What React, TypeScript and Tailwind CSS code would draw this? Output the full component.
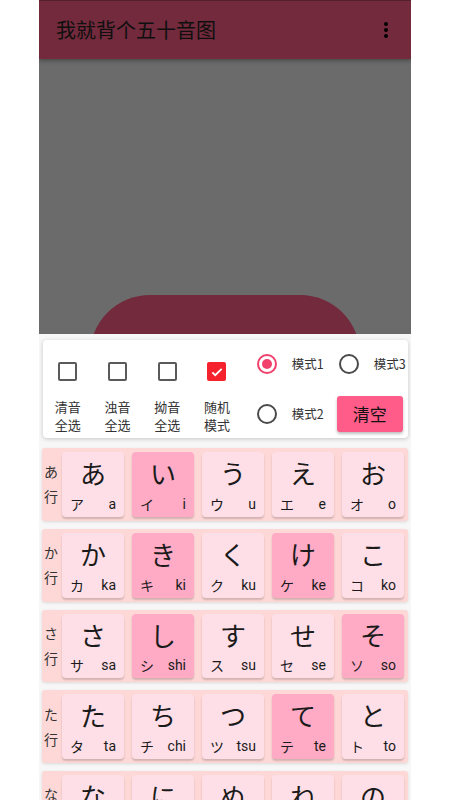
import React from 'react';

type Kana = { h: string; k: string; r: string; on?: boolean };

const ROWS: { label: string; keys: Kana[] }[] = [
  {
    label: 'あ',
    keys: [
      { h: 'あ', k: 'ア', r: 'a' },
      { h: 'い', k: 'イ', r: 'i', on: true },
      { h: 'う', k: 'ウ', r: 'u' },
      { h: 'え', k: 'エ', r: 'e' },
      { h: 'お', k: 'オ', r: 'o' },
    ],
  },
  {
    label: 'か',
    keys: [
      { h: 'か', k: 'カ', r: 'ka' },
      { h: 'き', k: 'キ', r: 'ki', on: true },
      { h: 'く', k: 'ク', r: 'ku' },
      { h: 'け', k: 'ケ', r: 'ke', on: true },
      { h: 'こ', k: 'コ', r: 'ko' },
    ],
  },
  {
    label: 'さ',
    keys: [
      { h: 'さ', k: 'サ', r: 'sa' },
      { h: 'し', k: 'シ', r: 'shi', on: true },
      { h: 'す', k: 'ス', r: 'su' },
      { h: 'せ', k: 'セ', r: 'se' },
      { h: 'そ', k: 'ソ', r: 'so', on: true },
    ],
  },
  {
    label: 'た',
    keys: [
      { h: 'た', k: 'タ', r: 'ta' },
      { h: 'ち', k: 'チ', r: 'chi' },
      { h: 'つ', k: 'ツ', r: 'tsu' },
      { h: 'て', k: 'テ', r: 'te', on: true },
      { h: 'と', k: 'ト', r: 'to' },
    ],
  },
  {
    label: 'な',
    keys: [
      { h: 'な', k: 'ナ', r: 'na' },
      { h: 'に', k: 'ニ', r: 'ni' },
      { h: 'ぬ', k: 'ヌ', r: 'nu' },
      { h: 'ね', k: 'ネ', r: 'ne' },
      { h: 'の', k: 'ノ', r: 'no' },
    ],
  },
];

const CHECKS = [
  { top: '清音', bottom: '全选', checked: false },
  { top: '浊音', bottom: '全选', checked: false },
  { top: '拗音', bottom: '全选', checked: false },
  { top: '随机', bottom: '模式', checked: true },
];

function CheckBox({ checked }: { checked: boolean }) {
  if (checked) {
    return (
      <div className="w-[19px] h-[19px] rounded-[2px] bg-[#f5222d] flex items-center justify-center">
        <svg width="14" height="14" viewBox="0 0 24 24" fill="none" stroke="white" strokeWidth={3.2}>
          <path d="M4 12.5l5 5L20 6.5" />
        </svg>
      </div>
    );
  }
  return <div className="w-[19px] h-[19px] rounded-[2px] border-2 border-[#5a5a5a]" />;
}

function Radio({ selected, label }: { selected: boolean; label: string }) {
  return (
    <div className="flex items-center">
      <div
        className={
          selected
            ? 'w-[20px] h-[20px] rounded-full border-2 border-[#f0406b] flex items-center justify-center'
            : 'w-[20px] h-[20px] rounded-full border-2 border-[#4a4a4a]'
        }
      >
        {selected && <div className="w-[10px] h-[10px] rounded-full bg-[#f0406b]" />}
      </div>
      <span className="ml-[15px] text-[12.5px] text-[#333] whitespace-nowrap">{label}</span>
    </div>
  );
}

function Key({ kana }: { kana: Kana }) {
  return (
    <div
      className={
        (kana.on ? 'bg-[#ffabc6] ' : 'bg-[#ffdfe7] ') +
        'w-[62px] h-[64.75px] rounded-[4px] shadow-[0_2px_2px_rgba(0,0,0,0.18)] flex flex-col justify-between pt-[5px] pb-[4px] px-[8px]'
      }
    >
      <div className="text-center text-[26px] leading-[31px] text-[#1a1a1a] font-['Noto_Sans_CJK_JP',sans-serif]">
        {kana.h}
      </div>
      <div className="flex items-end justify-between leading-[18px]">
        <span className="text-[14px] text-[#1a1a1a] font-['Noto_Sans_CJK_JP',sans-serif]">{kana.k}</span>
        <span className="text-[14px] text-[#1a1a1a] font-['Roboto',sans-serif]">{kana.r}</span>
      </div>
    </div>
  );
}

export default function App() {
  return (
    <div className="w-[450px] h-[800px] bg-white flex justify-center overflow-hidden font-['Noto_Sans_CJK_SC',sans-serif]">
      <div className="w-[372px] h-[800px] bg-[#f7f7f7] flex flex-col overflow-hidden">
        {/* Toolbar */}
        <div className="relative z-10 h-[59px] shrink-0 bg-[#722a3c] border-t border-[#55202d] flex items-center justify-between shadow-[0_2px_4px_rgba(0,0,0,0.3)]">
          <h1 className="pl-[17px] text-[20px] text-[#0f0f0f] font-normal">我就背个五十音图</h1>
          <div className="mr-[23px] flex flex-col gap-[2px]">
            <div className="w-[4px] h-[4px] rounded-full bg-black" />
            <div className="w-[4px] h-[4px] rounded-full bg-black" />
            <div className="w-[4px] h-[4px] rounded-full bg-black" />
          </div>
        </div>

        {/* Gray stage */}
        <div className="h-[275px] shrink-0 bg-[#6b6b6b] overflow-hidden flex flex-col items-center pt-[236px]">
          <div className="w-[270px] h-[100px] shrink-0 rounded-t-[60px] bg-[#722a3c]" />
        </div>

        {/* Options card */}
        <div className="mt-[6px] ml-[4px] mr-[3px] h-[98px] shrink-0 bg-white rounded-[4px] shadow-[0_1px_4px_rgba(0,0,0,0.2)] flex">
          <div className="flex">
            {CHECKS.map((c) => (
              <div key={c.top} className="w-[49.7px] flex flex-col items-center pt-[22px]">
                <CheckBox checked={c.checked} />
                <div className="mt-[17px] text-[13px] leading-[18px] text-[#333] text-center">
                  <div>{c.top}</div>
                  <div>{c.bottom}</div>
                </div>
              </div>
            ))}
          </div>
          <div className="ml-[15px] grid grid-cols-[82px_70px] grid-rows-[48px_36px] gap-y-[8px]">
            <div className="flex items-center">
              <Radio selected label="模式1" />
            </div>
            <div className="flex items-center">
              <Radio selected={false} label="模式3" />
            </div>
            <div className="flex items-center">
              <Radio selected={false} label="模式2" />
            </div>
            <button className="ml-[-2px] w-[66px] h-[36px] rounded-[3px] bg-[#ff5c8a] text-[17px] text-[#111] shadow-[0_2px_3px_rgba(0,0,0,0.25)]">
              清空
            </button>
          </div>
        </div>

        {/* Kana rows */}
        <div className="mt-[10px] ml-[3px] mr-[3px] flex flex-col gap-[8px]">
          {ROWS.map((row) => (
            <div
              key={row.label}
              className="h-[72.75px] shrink-0 bg-[#fed8d6] rounded-[3px] shadow-[0_1px_3px_rgba(0,0,0,0.12)] flex items-center pl-[2px] pr-[4px]"
            >
              <div className="w-[18px] flex flex-col text-[14px] leading-[25px] text-[#333] font-['Noto_Sans_CJK_JP',sans-serif]">
                <span>{row.label}</span>
                <span>行</span>
              </div>
              <div className="flex gap-[8px]">
                {row.keys.map((k) => (
                  <Key key={k.h} kana={k} />
                ))}
              </div>
            </div>
          ))}
        </div>
      </div>
    </div>
  );
}
